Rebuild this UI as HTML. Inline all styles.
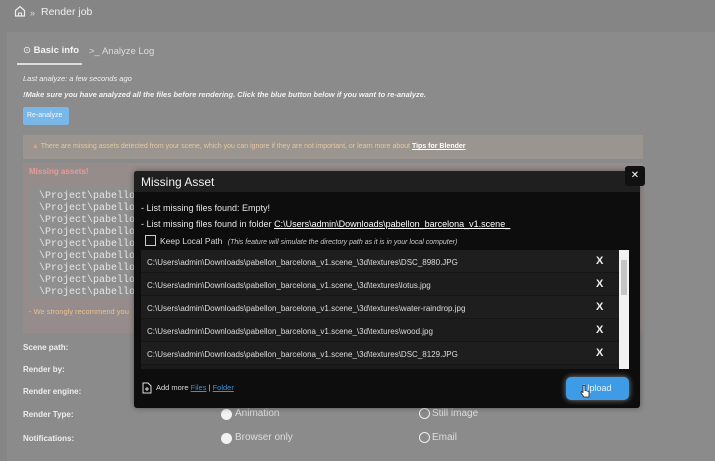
<!DOCTYPE html>
<html><head><meta charset="utf-8"><style>
*{margin:0;padding:0;box-sizing:border-box}
body{width:715px;height:461px;overflow:hidden;background:#858585;font-family:"Liberation Sans",sans-serif;position:relative;color:#eee}
.a{position:absolute;white-space:nowrap}
.mono{font-family:"Liberation Mono",monospace;font-size:10px;color:#e6e6e6}
.row{position:absolute;left:141px;width:478px;height:23px;font-size:8px;color:#ddd;padding:8px 0 0 6px;border-bottom:1px solid #161616}
.row b{position:absolute;left:455px;top:5px;font-size:11px;color:#eee}
.lbl{font-size:8px;font-weight:bold;color:#eee}
.rad{position:absolute;width:11px;height:11px;border-radius:50%}
</style></head><body>
<svg class="a" style="left:14px;top:5px" width="12" height="12" viewBox="0 0 12 12"><path d="M1.5 5.5L6 1.5l4.5 4V11h-9z" fill="none" stroke="#eee" stroke-width="1.2"/><path d="M4.5 11V8h3v3" fill="none" stroke="#eee" stroke-width="1"/></svg>
<div class="a" style="left:30px;top:8px;font-size:9px;color:#ddd">»</div>
<div class="a" style="left:41px;top:6px;font-size:10.5px;color:#f0f0f0">Render job</div>
<div class="a" style="left:7px;top:32px;width:708px;height:429px;background:#8b8b8b"></div>
<div class="a" style="left:23px;top:45px;font-size:9.5px;color:#f4f4f4">⊙ <span style="font-weight:bold">Basic info</span></div>
<div class="a" style="left:89px;top:46px;font-size:9.5px;color:#ddd">&gt;_ Analyze Log</div>
<div class="a" style="left:17px;top:63px;width:65px;height:2px;background:#ddd"></div>
<div class="a" style="left:23px;top:74px;font-size:7.5px;font-style:italic;color:#f2f2f2">Last analyze: a few seconds ago</div>
<div class="a" style="left:23px;top:90px;font-size:7.5px;font-style:italic;font-weight:bold;color:#f2f2f2">!Make sure you have analyzed all the files before rendering. Click the blue button below if you want to re-analyze.</div>
<div class="a" style="left:23px;top:107px;width:46px;height:18px;background:#79b7e8;border-radius:2px;font-size:7px;color:#f4f8fc;padding:5px 0 0 4px">Re-analyze</div>
<div class="a" style="left:23px;top:135px;width:620px;height:24px;background:#9a958e;font-size:7px;color:#e2c9a5;padding:8px 0 0 9px"><span style="color:#e9a070">▲</span> There are missing assets detected from your scene, which you can ignore if they are not important, or learn more about <u style="color:#fff;font-weight:bold">Tips for Blender</u></div>
<div class="a" style="left:23px;top:163px;width:620px;height:170px;background:#968c8c"></div>
<div class="a" style="left:29px;top:167px;font-size:8px;font-weight:bold;color:#e89a9a">Missing assets!</div>
<div class="a" style="left:30px;top:186px;width:110px;height:112px;background:#8f8f8f"></div>
<div class="a mono" style="left:39px;top:191px;line-height:12px;font-size:10px">\Project\pabellon_b<br>\Project\pabellon_b<br>\Project\pabellon_b<br>\Project\pabellon_b<br>\Project\pabellon_b<br>\Project\pabellon_b<br>\Project\pabellon_b<br>\Project\pabellon_b<br>\Project\pabellon_b</div>
<div class="a" style="left:29px;top:307px;font-size:7.5px;color:#e8c090">- We strongly recommend you</div>
<div class="a lbl" style="left:23px;top:343px">Scene path:</div>
<div class="a lbl" style="left:23px;top:365px">Render by:</div>
<div class="a lbl" style="left:23px;top:387px">Render engine:</div>
<div class="a lbl" style="left:23px;top:410px">Render Type:</div>
<div class="a lbl" style="left:23px;top:434px">Notifications:</div>
<div class="rad" style="left:221px;top:409px;background:#f2f2f2"></div>
<div class="a" style="left:235px;top:408px;font-size:10px;color:#ddd">Animation</div>
<div class="rad" style="left:419px;top:408px;border:1.5px solid #eee"></div>
<div class="a" style="left:432px;top:408px;font-size:10px;color:#ddd">Still image</div>
<div class="rad" style="left:221px;top:433px;background:#f2f2f2"></div>
<div class="a" style="left:235px;top:432px;font-size:10px;color:#ddd">Browser only</div>
<div class="rad" style="left:419px;top:432px;border:1.5px solid #eee"></div>
<div class="a" style="left:432px;top:432px;font-size:10px;color:#ddd">Email</div>

<div class="a" style="left:134px;top:171px;width:506px;height:237px;background:#0d0d0d;border-radius:3px;box-shadow:0 0 6px rgba(0,0,0,.4)"></div>
<div class="a" style="left:134px;top:171px;width:506px;height:21px;background:#1f1f1f;border-radius:3px 3px 0 0;font-size:12px;color:#f2f2f2;padding:4px 0 0 7px">Missing Asset</div>
<div class="a" style="left:625px;top:166px;width:20px;height:20px;background:#111;border-radius:3px;color:#fff;font-size:10px;text-align:center;line-height:20px">✕</div>
<div class="a" style="left:141px;top:203px;font-size:9px;color:#e6e6e6">- List missing files found: Empty!</div>
<div class="a" style="left:141px;top:219px;font-size:9px;color:#e6e6e6">- List missing files found in folder <u style="color:#fff">C:\Users\admin\Downloads\pabellon_barcelona_v1.scene_</u></div>
<div class="a" style="left:145px;top:235px;width:11px;height:11px;border:1px solid #ccc;background:#111"></div>
<div class="a" style="left:160px;top:236px;font-size:8.5px;color:#ddd">Keep Local Path <i style="font-size:7px;color:#ccc;margin-left:3px">(This feature will simulate the directory path as it is in your local computer)</i></div>
<div class="a" style="left:141px;top:250px;width:478px;height:119px;background:#1b1b1b"></div>
<div class="row" style="top:250px;background:#1e1e1e">C:\Users\admin\Downloads\pabellon_barcelona_v1.scene_\3d\textures\DSC_8980.JPG<b>X</b></div>
<div class="row" style="top:273px;background:#1c1c1c">C:\Users\admin\Downloads\pabellon_barcelona_v1.scene_\3d\textures\lotus.jpg<b>X</b></div>
<div class="row" style="top:296px;background:#1e1e1e">C:\Users\admin\Downloads\pabellon_barcelona_v1.scene_\3d\textures\water-raindrop.jpg<b>X</b></div>
<div class="row" style="top:319px;background:#1c1c1c">C:\Users\admin\Downloads\pabellon_barcelona_v1.scene_\3d\textures\wood.jpg<b>X</b></div>
<div class="row" style="top:342px;background:#1e1e1e">C:\Users\admin\Downloads\pabellon_barcelona_v1.scene_\3d\textures\DSC_8129.JPG<b>X</b></div>
<div class="a" style="left:619px;top:250px;width:10px;height:119px;background:#f1f1f1"></div>
<div class="a" style="left:621px;top:260px;width:6px;height:35px;background:#c4c4c4"></div>
<svg class="a" style="left:142px;top:382px" width="10" height="12" viewBox="0 0 10 12"><path d="M1 1h5l3 3v7H1z" fill="none" stroke="#ddd" stroke-width="1"/><path d="M5 5v4M3 7h4" stroke="#ddd" stroke-width="1"/></svg>
<div class="a" style="left:156px;top:383px;font-size:7.5px;color:#ddd">Add more <u style="color:#3b8fd6">Files</u> | <u style="color:#3b8fd6">Folder</u></div>
<div class="a" style="left:566px;top:377px;width:63px;height:23px;background:#3e9be5;border-radius:5px;box-shadow:0 0 6px rgba(255,255,255,.5);font-size:9px;color:#e8f3fc;padding:6px 0 0 17px">Upload</div>
<svg class="a" style="left:580px;top:384px" width="10" height="14" viewBox="0 0 10 14"><path d="M3 1.5v7L1.5 7.5 1 9l3 4h5V7.5L5 6.5V1.5z" fill="#fff" stroke="#222" stroke-width=".8"/></svg>
</body></html>
